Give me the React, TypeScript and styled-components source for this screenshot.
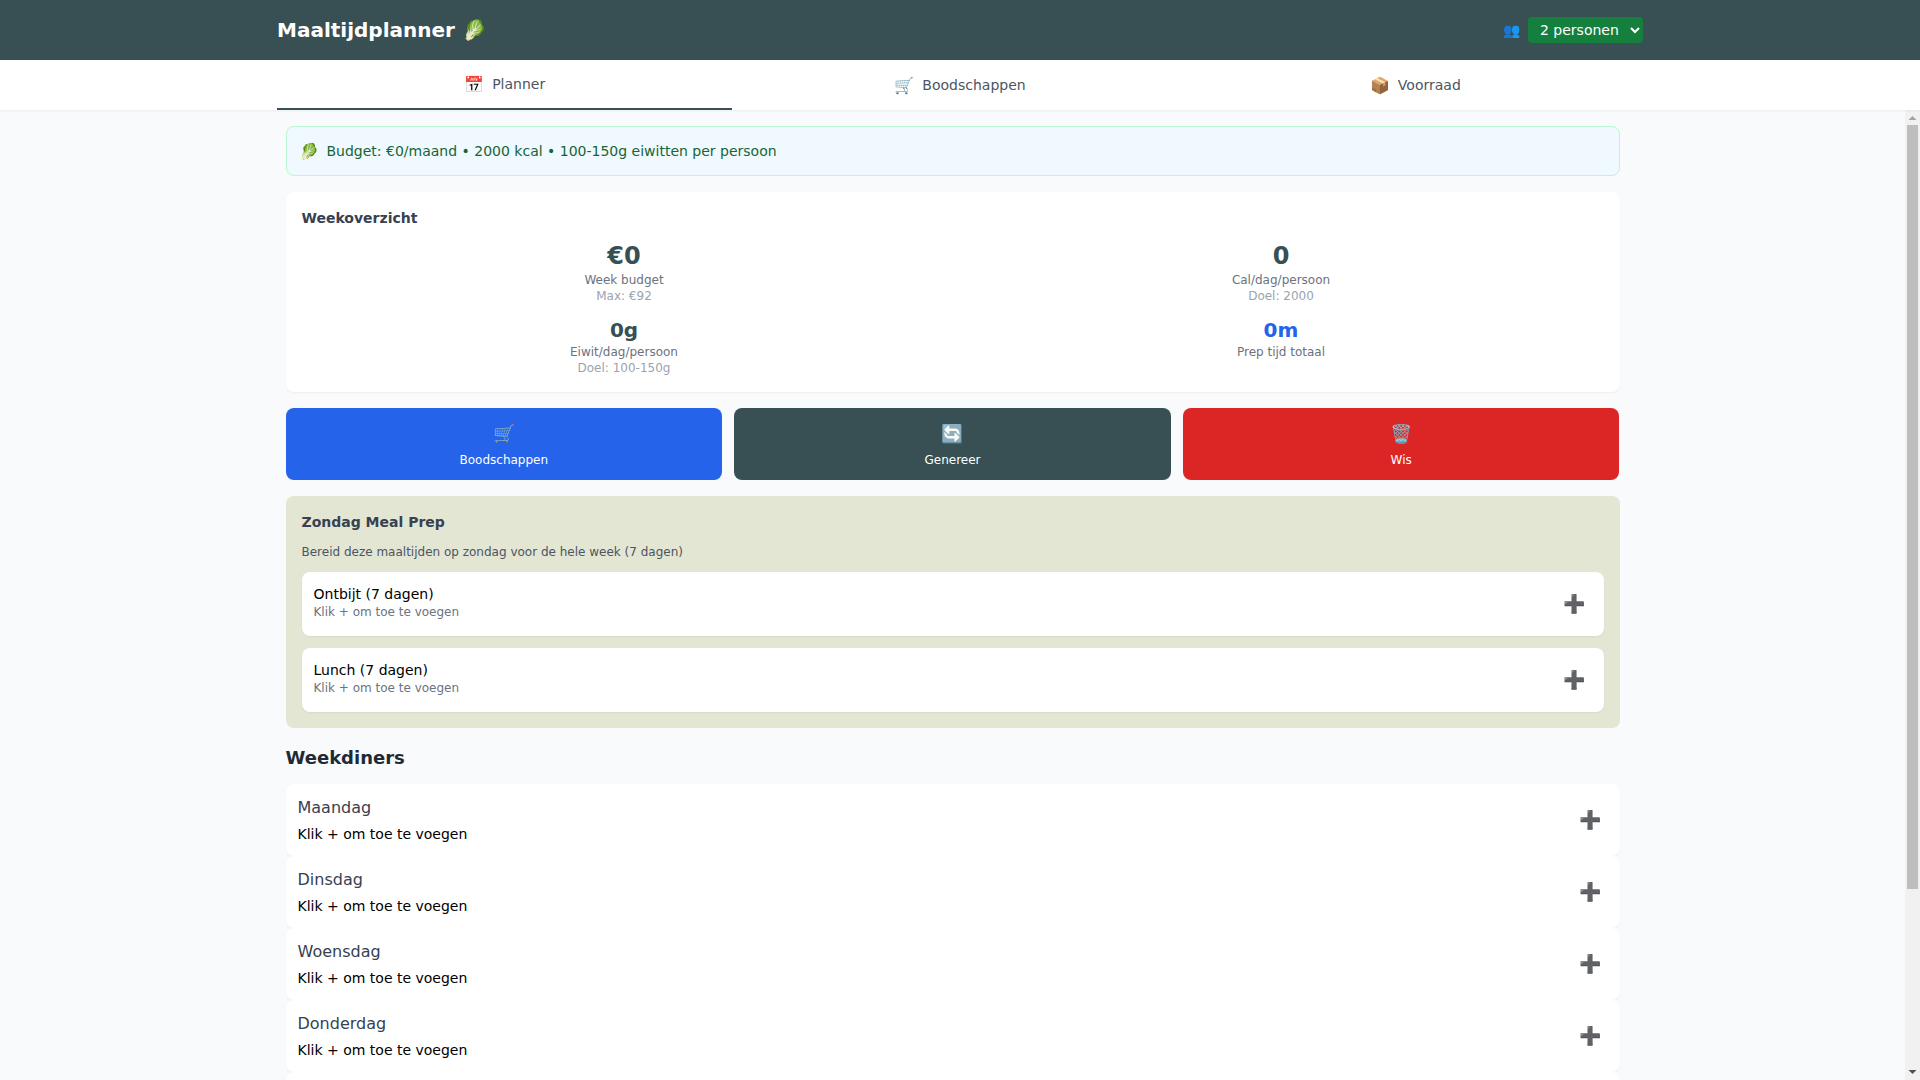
import styled, { createGlobalStyle } from "styled-components";

const GlobalStyle = createGlobalStyle`
    html, body {
        margin: 0;
        height: 100%;
        overflow: hidden;
    }
    body {
        font-family: "DejaVu Sans", sans-serif;
        background: #f9fafb;
    }
    * {
        box-sizing: border-box;
    }
`;

//styled-components
const Page = styled.div`
    height: 100vh;
    display: flex;
    flex-direction: column;
`;

const Header = styled.header`
    height: 60px;
    flex: none;
    background: #384f53;
`;

const HeaderInner = styled.div`
    max-width: 1366px;
    height: 100%;
    margin: 0 auto;
    display: flex;
    justify-content: space-between;
    align-items: center;
`;

const Title = styled.h1`
    margin: 0;
    font-size: 20px;
    line-height: 28px;
    font-weight: bold;
    color: #fff;
`;

const People = styled.div`
    display: flex;
    align-items: center;
    gap: 8px;
    font-size: 14px;
`;

const PeopleSelect = styled.select`
    width: 115px;
    height: 26px;
    padding: 0 4px 0 8px;
    border: none;
    border-radius: 4px;
    background: #15803d;
    color: #fff;
    font-family: inherit;
    font-size: 14px;
`;

const Nav = styled.nav`
    height: 50px;
    flex: none;
    position: relative;
    background: #fff;
    box-shadow: 0 1px 2px rgba(0, 0, 0, 0.05);
`;

const NavInner = styled.div`
    max-width: 1366px;
    height: 50px;
    margin: 0 auto;
    display: grid;
    grid-template-columns: repeat(3, 1fr);
`;

const Tab = styled.button<{ $active?: boolean }>`
    display: flex;
    justify-content: center;
    align-items: center;
    gap: 8px;
    padding: 0;
    border: none;
    border-bottom: ${(p) => (p.$active ? "2px solid #384f53" : "none")};
    background: none;
    color: #4b5563;
    font-family: inherit;
    font-size: 14px;
`;

const TabIcon = styled.span`
    font-size: 16px;
`;

const Body = styled.div`
    flex: 1;
    min-height: 0;
    display: flex;
`;

const Main = styled.main`
    flex: 1;
    min-width: 0;
    overflow: hidden;
`;

// the browser hides its own scrollbar here, so it is drawn as a column
const ScrollBar = styled.div`
    width: 15px;
    flex: none;
    display: flex;
    flex-direction: column;
    align-items: center;
    background: #f1f1f1;
`;

const ScrollArrow = styled.svg`
    width: 15px;
    height: 15px;
    flex: none;
`;

const ScrollThumb = styled.div`
    width: 11px;
    height: 764px;
    flex: none;
    background: #bebebe;
`;

const ScrollGap = styled.div`
    flex: 1;
`;

const Content = styled.div`
    max-width: 1366px;
    margin: 0 auto;
    padding: 16px;
    display: flex;
    flex-direction: column;
    gap: 16px;
`;

const Notice = styled.div`
    height: 50px;
    padding: 0 12px;
    display: flex;
    align-items: center;
    gap: 8px;
    border: 1px solid #bbf7d0;
    border-radius: 8px;
    background: #f0f9ff;
    color: #166534;
    font-size: 14px;
`;

const NoticeIcon = styled.span`
    font-size: 16px;
`;

const Card = styled.section`
    padding: 16px;
    border-radius: 8px;
    background: #fff;
    box-shadow: 0 1px 2px rgba(0, 0, 0, 0.05);
`;

const CardTitle = styled.h3`
    margin: 0 0 12px;
    font-size: 14px;
    line-height: 20px;
    font-weight: bold;
    color: #374151;
`;

const StatGrid = styled.div`
    display: grid;
    grid-template-columns: repeat(2, 1fr);
    gap: 12px;
    text-align: center;
`;

const StatValue = styled.div<{ $size: number; $blue?: boolean }>`
    font-size: ${(p) => p.$size}px;
    line-height: ${(p) => (p.$size === 24 ? 32 : 28)}px;
    font-weight: bold;
    color: ${(p) => (p.$blue ? "#2563eb" : "#384f53")};
`;

const StatLabel = styled.div`
    font-size: 12px;
    line-height: 16px;
    color: #6b7280;
`;

const StatSub = styled.div`
    font-size: 12px;
    line-height: 16px;
    color: #9ca3af;
`;

const ActionRow = styled.div`
    display: grid;
    grid-template-columns: repeat(3, 1fr);
    gap: 12px;
`;

const ActionButton = styled.button<{ $bg: string }>`
    height: 72px;
    display: flex;
    flex-direction: column;
    align-items: center;
    justify-content: center;
    gap: 6px;
    border: none;
    border-radius: 8px;
    background: ${(p) => p.$bg};
    color: #fff;
    font-family: inherit;
    font-size: 12px;
`;

const ActionIcon = styled.span`
    font-size: 18px;
    line-height: 26px;
`;

const MealPrep = styled.section`
    padding: 16px;
    border-radius: 8px;
    background: #e3e6d3;
`;

const MealPrepText = styled.p`
    margin: 0 0 12px;
    font-size: 12px;
    line-height: 16px;
    color: #4b5563;
`;

const PrepList = styled.div`
    display: flex;
    flex-direction: column;
    gap: 12px;
`;

const PrepCard = styled.div`
    height: 64px;
    padding: 0 12px;
    display: flex;
    justify-content: space-between;
    align-items: center;
    border-radius: 8px;
    background: #fff;
    box-shadow: 0 1px 2px rgba(0, 0, 0, 0.05);
`;

const PrepText = styled.div`
    align-self: flex-start;
    padding-top: 12px;
`;

const PrepName = styled.div`
    font-size: 14px;
    line-height: 20px;
    color: #000;
`;

const PrepHint = styled.div`
    font-size: 12px;
    line-height: 16px;
    color: #6b7280;
`;

const AddButton = styled.button`
    width: 36px;
    height: 36px;
    display: flex;
    justify-content: center;
    align-items: center;
    padding: 0;
    border: none;
    background: none;
    font-family: inherit;
    font-size: 18px;
    line-height: 28px;
`;

const SectionTitle = styled.h2`
    margin: 0 0 12px;
    font-size: 18px;
    line-height: 28px;
    font-weight: bold;
    color: #1f2937;
`;

const DayList = styled.div`
    display: flex;
    flex-direction: column;
`;

const DayCard = styled.div`
    height: 72px;
    padding: 0 12px;
    display: flex;
    justify-content: space-between;
    align-items: center;
    border-radius: 8px;
    background: #fff;
    box-shadow: 0 1px 2px rgba(0, 0, 0, 0.05);
`;

const DayName = styled.div`
    font-size: 16px;
    line-height: 24px;
    margin-bottom: 4px;
    color: #374151;
`;

const DayHint = styled.div`
    font-size: 14px;
    line-height: 20px;
    color: #000;
`;

const days = ["Maandag", "Dinsdag", "Woensdag", "Donderdag", "Vrijdag", "Zaterdag", "Zondag"];

//Components
const App = () => {
    return (
        <Page>
            <GlobalStyle />
            <Header>
                <HeaderInner>
                    <Title>Maaltijdplanner 🥬</Title>
                    <People>
                        <span>👥</span>
                        <PeopleSelect defaultValue="2">
                            <option value="1">1 persoon</option>
                            <option value="2">2 personen</option>
                        </PeopleSelect>
                    </People>
                </HeaderInner>
            </Header>
            <Nav>
                <NavInner>
                    <Tab $active>
                        <TabIcon>📅</TabIcon>
                        <span>Planner</span>
                    </Tab>
                    <Tab>
                        <TabIcon>🛒</TabIcon>
                        <span>Boodschappen</span>
                    </Tab>
                    <Tab>
                        <TabIcon>📦</TabIcon>
                        <span>Voorraad</span>
                    </Tab>
                </NavInner>
            </Nav>
            <Body>
                <Main>
                    <Content>
                        <Notice>
                            <NoticeIcon>🥬</NoticeIcon>
                            <span>Budget: €0/maand • 2000 kcal • 100-150g eiwitten per persoon</span>
                        </Notice>
                        <Card>
                            <CardTitle>Weekoverzicht</CardTitle>
                            <StatGrid>
                                <div>
                                    <StatValue $size={24}>€0</StatValue>
                                    <StatLabel>Week budget</StatLabel>
                                    <StatSub>Max: €92</StatSub>
                                </div>
                                <div>
                                    <StatValue $size={24}>0</StatValue>
                                    <StatLabel>Cal/dag/persoon</StatLabel>
                                    <StatSub>Doel: 2000</StatSub>
                                </div>
                                <div>
                                    <StatValue $size={20}>0g</StatValue>
                                    <StatLabel>Eiwit/dag/persoon</StatLabel>
                                    <StatSub>Doel: 100-150g</StatSub>
                                </div>
                                <div>
                                    <StatValue $size={20} $blue>0m</StatValue>
                                    <StatLabel>Prep tijd totaal</StatLabel>
                                </div>
                            </StatGrid>
                        </Card>
                        <ActionRow>
                            <ActionButton $bg="#2563eb">
                                <ActionIcon>🛒</ActionIcon>
                                Boodschappen
                            </ActionButton>
                            <ActionButton $bg="#384f53">
                                <ActionIcon>🔄</ActionIcon>
                                Genereer
                            </ActionButton>
                            <ActionButton $bg="#dc2626">
                                <ActionIcon>🗑️</ActionIcon>
                                Wis
                            </ActionButton>
                        </ActionRow>
                        <MealPrep>
                            <CardTitle>Zondag Meal Prep</CardTitle>
                            <MealPrepText>Bereid deze maaltijden op zondag voor de hele week (7 dagen)</MealPrepText>
                            <PrepList>
                                {["Ontbijt (7 dagen)", "Lunch (7 dagen)"].map((name) => (
                                    <PrepCard key={name}>
                                        <PrepText>
                                            <PrepName>{name}</PrepName>
                                            <PrepHint>Klik + om toe te voegen</PrepHint>
                                        </PrepText>
                                        <AddButton aria-label="Toevoegen">➕</AddButton>
                                    </PrepCard>
                                ))}
                            </PrepList>
                        </MealPrep>
                        <div>
                            <SectionTitle>Weekdiners</SectionTitle>
                            <DayList>
                                {days.map((day) => (
                                    <DayCard key={day}>
                                        <div>
                                            <DayName>{day}</DayName>
                                            <DayHint>Klik + om toe te voegen</DayHint>
                                        </div>
                                        <AddButton aria-label="Toevoegen">➕</AddButton>
                                    </DayCard>
                                ))}
                            </DayList>
                        </div>
                    </Content>
                </Main>
                <ScrollBar>
                    <ScrollArrow viewBox="0 0 15 15">
                        <path d="M7.5 6 L11.5 10 H3.5 Z" fill="#a3a3a3" />
                    </ScrollArrow>
                    <ScrollThumb />
                    <ScrollGap />
                    <ScrollArrow viewBox="0 0 15 15">
                        <path d="M3.5 5 H11.5 L7.5 9 Z" fill="#505050" />
                    </ScrollArrow>
                </ScrollBar>
            </Body>
        </Page>
    );
};

export default App;
